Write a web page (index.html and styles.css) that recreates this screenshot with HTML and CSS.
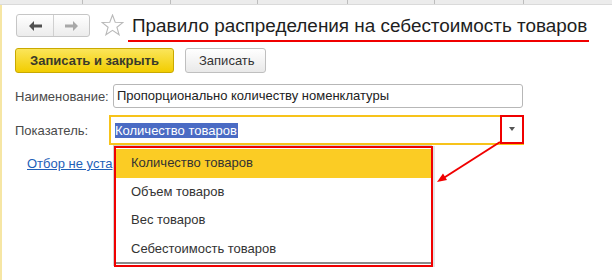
FILE: index.html
```html
<!DOCTYPE html>
<html lang="ru">
<head>
    <meta charset="UTF-8">
    <title>Правило распределения на себестоимость товаров</title>
    <link rel="stylesheet" href="styles.css">
</head>
<body>
    <div class="tabs">
        <span class="tab w83"></span>
        <span class="tab w88"></span>
        <span class="tab w87"></span>
        <span class="tab w90"></span>
        <span class="tab w87"></span>
        <span class="tab w89"></span>
        <span class="tab"></span>
    </div>
    <div class="page">
        <header class="header">
            <div class="nav">
                <button class="nav-btn">
                    <svg width="13" height="10" viewBox="0 0 13 10"><path d="M0 5 L5 0 L5 3.5 L13 3.5 L13 6.5 L5 6.5 L5 10 Z" fill="#505050"/></svg>
                </button>
                <button class="nav-btn">
                    <svg width="13" height="10" viewBox="0 0 13 10"><path d="M13 5 L8 0 L8 3.5 L0 3.5 L0 6.5 L8 6.5 L8 10 Z" fill="#a8a8a8"/></svg>
                </button>
            </div>
            <svg class="star" width="23" height="22" viewBox="0 0 23 22">
                <polygon points="11.5,1 14.2,8.2 22,8.4 15.9,13.2 18.1,20.8 11.5,16.4 4.9,20.8 7.1,13.2 1,8.4 8.8,8.2" fill="none" stroke="#b9b9b9" stroke-width="1.1"/>
            </svg>
            <h1 class="title">Правило распределения на себестоимость товаров</h1>
        </header>

        <div class="actions">
            <button class="btn btn-primary">Записать и закрыть</button>
            <button class="btn">Записать</button>
        </div>

        <div class="row row-name">
            <label class="label">Наименование:</label>
            <div class="input">Пропорционально количеству номенклатуры</div>
        </div>

        <div class="row row-index">
            <label class="label">Показатель:</label>
            <div class="field">
                <span class="selected">Количество товаров</span>
                <span class="drop-btn"><span class="tri"></span></span>
                <ul class="dropdown">
                    <li class="active">Количество товаров</li>
                    <li>Объем товаров</li>
                    <li>Вес товаров</li>
                    <li>Себестоимость товаров</li>
                </ul>
            </div>
        </div>

        <div class="link-row">
            <a href="#" class="link">Отбор не уста</a>
        </div>
    </div>

    <svg class="arrow" width="612" height="280" viewBox="0 0 612 280">
        <line x1="500" y1="142" x2="442" y2="179" stroke="#f00000" stroke-width="2"/>
        <polygon points="437,182 443,173.5 447,180" fill="#f00000"/>
    </svg>
</body>
</html>
```

FILE: styles.css
```css
html, body {
    margin: 0;
    height: 100%;
}
body {
    background-color: #ffffff;
    font-family: "Liberation Sans", Arial, sans-serif;
    font-size: 13px;
    color: #333333;
    position: relative;
    overflow: hidden;
}
.tabs {
    display: flex;
    height: 4px;
    background-color: #ececec;
    border-bottom: 1px solid #dadada;
}
.tab {
    height: 4px;
    border-right: 1px solid #bdbdbd;
}
.tab:last-child {
    border-right: none;
    flex: 1;
}
.w83 { width: 82px; }
.w88 { width: 87px; }
.w87 { width: 86px; }
.w90 { width: 89px; }
.w89 { width: 88px; }
.page {
    border-left: 2px solid #f6e6a4;
    padding-left: 13px;
    height: 100%;
}
.header {
    display: flex;
    align-items: flex-start;
    padding-top: 9px;
}
.nav {
    display: flex;
    margin-left: 1px;
    height: 23px;
    border: 1px solid #c6c6c6;
    border-radius: 3px;
    box-sizing: border-box;
    background: linear-gradient(#ffffff, #ececec);
}
.nav-btn {
    width: 36px;
    height: 21px;
    border: none;
    background: none;
    padding: 0;
    display: flex;
    align-items: center;
    justify-content: center;
}
.nav-btn + .nav-btn {
    border-left: 1px solid #d0d0d0;
}
.star {
    margin-left: 11px;
    margin-top: 0;
}
.title {
    margin: 0 0 0 4px;
    padding: 0 2px 0 4px;
    font-size: 18.9px;
    font-weight: normal;
    color: #1e1e1e;
    height: 26px;
    line-height: 24px;
    border-bottom: 2px solid #f00000;
}
.actions {
    display: flex;
    margin-top: 6px;
}
.btn {
    height: 25px;
    padding: 0 13px;
    font-family: "Liberation Sans", Arial, sans-serif;
    font-size: 13px;
    color: #333333;
    border: 1px solid #bfbfbf;
    border-radius: 3px;
    background: linear-gradient(#ffffff, #e9e9e9);
    margin-right: 11px;
    width: 81px;
}
.btn-primary {
    width: 159px;
    font-weight: bold;
    color: #3a3a2a;
    border-color: #c9a900;
    background: linear-gradient(#fbe55a, #f2cd00);
}
.row {
    display: flex;
    align-items: center;
}
.row-name {
    margin-top: 11px;
}
.label {
    width: 98px;
    color: #4a4a4a;
}
.input {
    width: 410px;
    height: 24px;
    box-sizing: border-box;
    border: 1px solid #b7b7b7;
    border-radius: 3px;
    padding: 0 3px;
    line-height: 22px;
    color: #222222;
}
.row-index {
    margin-top: 7px;
}
.row-index .label {
    width: 94px;
}
.field {
    position: relative;
    width: 415px;
    height: 30px;
    box-sizing: border-box;
    border: 2px solid #f7c31a;
    border-right: none;
    padding-left: 4px;
    display: flex;
    align-items: center;
}
.selected {
    background-color: #4a6bc4;
    color: #ffffff;
    line-height: 15px;
    padding-right: 1px;
}
.drop-btn {
    position: absolute;
    right: 0;
    top: -2px;
    width: 24px;
    height: 29px;
    box-sizing: border-box;
    border: 2px solid #f00000;
    display: flex;
    align-items: center;
    justify-content: center;
}
.tri {
    width: 0;
    height: 0;
    border-left: 3px solid transparent;
    border-right: 3px solid transparent;
    border-top: 4px solid #555555;
    margin-top: -1px;
}
.dropdown {
    position: absolute;
    left: 3px;
    top: 29px;
    width: 315px;
    margin: 0;
    padding: 1px 0 2px;
    list-style: none;
    background-color: #ffffff;
    border: 2px solid #f00000;
    box-shadow: -1px -1px 0 #d0d0d0, 2px 0 0 #e4e4e4;
    z-index: 2;
}
.dropdown::after {
    content: "";
    position: absolute;
    left: 0;
    right: 0;
    bottom: 1px;
    height: 2px;
    background-color: #8a8a8a;
}
.dropdown li {
    height: 28.5px;
    line-height: 28.5px;
    padding-left: 15px;
    color: #333333;
}
.dropdown li.active {
    background-color: #fbcc24;
}
.link-row {
    margin-top: 11px;
    padding-left: 12px;
    white-space: nowrap;
}
.link {
    color: #1f5fb8;
    text-decoration: underline;
}
.arrow {
    position: absolute;
    left: 0;
    top: 0;
    pointer-events: none;
    z-index: 3;
}
```
